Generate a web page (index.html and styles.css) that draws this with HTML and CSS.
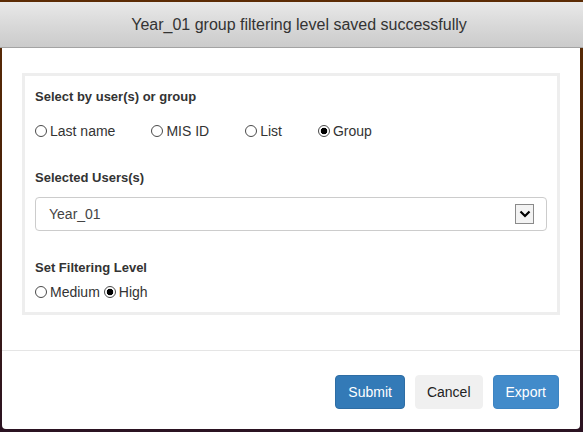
FILE: index.html
```html
<!DOCTYPE html>
<html>
<head>
<meta charset="utf-8">
<link rel="stylesheet" href="styles.css">
</head>
<body>
<div class="modal">
  <div class="header">Year_01 group filtering level saved successfully</div>
  <div class="content">
    <div class="panel">
      <div class="label first">Select by user(s) or group</div>
      <div class="options wide">
        <label class="opt"><input type="radio" name="by" class="radio">Last name</label>
        <label class="opt"><input type="radio" name="by" class="radio">MIS ID</label>
        <label class="opt"><input type="radio" name="by" class="radio">List</label>
        <label class="opt"><input type="radio" name="by" class="radio" checked>Group</label>
      </div>
      <div class="label second">Selected Users(s)</div>
      <div class="select">
        <span class="select-text">Year_01</span>
        <span class="arrow"><svg width="12" height="8" viewBox="0 0 12 8"><path d="M1.5 1.5 L6 6 L10.5 1.5" fill="none" stroke="#000" stroke-width="2.2"/></svg></span>
      </div>
      <div class="label third">Set Filtering Level</div>
      <div class="options narrow">
        <label class="opt"><input type="radio" name="lvl" class="radio">Medium</label>
        <label class="opt"><input type="radio" name="lvl" class="radio" checked>High</label>
      </div>
    </div>
    <div class="footer">
      <button class="btn primary">Submit</button>
      <button class="btn default">Cancel</button>
      <button class="btn info">Export</button>
    </div>
  </div>
</div>
</body>
</html>
```
FILE: styles.css
```css
html, body {
  margin: 0;
  padding: 0;
}
body {
  width: 583px;
  height: 432px;
  overflow: hidden;
  background: linear-gradient(to bottom, #5c2c05 0%, #4a2208 40%, #2b1322 100%);
  font-family: "Liberation Sans", Arial, sans-serif;
  color: #333;
}
.modal {
  padding-top: 2px;
}
.header {
  height: 45px;
  line-height: 45px;
  text-align: center;
  padding-left: 15px;
  font-size: 16px;
  color: #333;
  background: linear-gradient(to bottom, #e9e9e9 0%, #d9d9d9 50%, #cbcbcb 100%);
  border-bottom: 1px solid #a3a3a3;
}
.content {
  margin: 0 3px 0 2px;
  background: #fff;
  border-radius: 0 0 4px 4px;
  padding: 25px 0 0 0;
}
.panel {
  margin: 0 20px;
  border: 3px solid #eeeeee;
  padding: 13px 10px 10px 10px;
}
.label {
  font-size: 13px;
  font-weight: bold;
  line-height: 16px;
}
.options {
  display: flex;
  font-size: 14px;
  line-height: 20px;
  margin-top: 16px;
}
.options.wide {
  gap: 36px;
}
.options.narrow {
  gap: 4px;
  margin-top: 6px;
}
.opt {
  display: flex;
  align-items: center;
}
.radio {
  appearance: none;
  -webkit-appearance: none;
  width: 12px;
  height: 12px;
  margin: 0 3px 0 0;
  border: 1px solid #4a4a4a;
  border-radius: 50%;
  background: #fff;
}
.radio:checked {
  background: radial-gradient(circle, #000 0, #000 3px, #fff 3.6px);
}
.label.second {
  margin-top: 29px;
}
.select {
  margin-top: 11px;
  height: 32px;
  border: 1px solid #ccc;
  border-radius: 4px;
  display: flex;
  align-items: center;
  justify-content: space-between;
  padding: 0 12px 0 13px;
  font-size: 14px;
  color: #444;
}
.arrow {
  width: 17px;
  height: 18px;
  border: 1px solid #8a8a8a;
  background: #f3f3f3;
  display: flex;
  align-items: center;
  justify-content: center;
}
.label.third {
  margin-top: 29px;
}
.footer {
  margin-top: 35px;
  border-top: 1px solid #e5e5e5;
  padding: 24px 21px 20px 0;
  display: flex;
  justify-content: flex-end;
  gap: 10px;
}
.btn {
  font-family: "Liberation Sans", Arial, sans-serif;
  font-size: 14px;
  line-height: 20px;
  padding: 6px 12px;
  border-radius: 4px;
  border: 1px solid transparent;
}
.btn.primary {
  background: #337ab7;
  border-color: #2e6da4;
  color: #fff;
}
.btn.default {
  background: #f0f0f0;
  border-color: #f0f0f0;
  color: #222;
  padding: 6px 11px;
}
.btn.info {
  background: #428bca;
  border-color: #3d84c2;
  color: #fff;
}
```
